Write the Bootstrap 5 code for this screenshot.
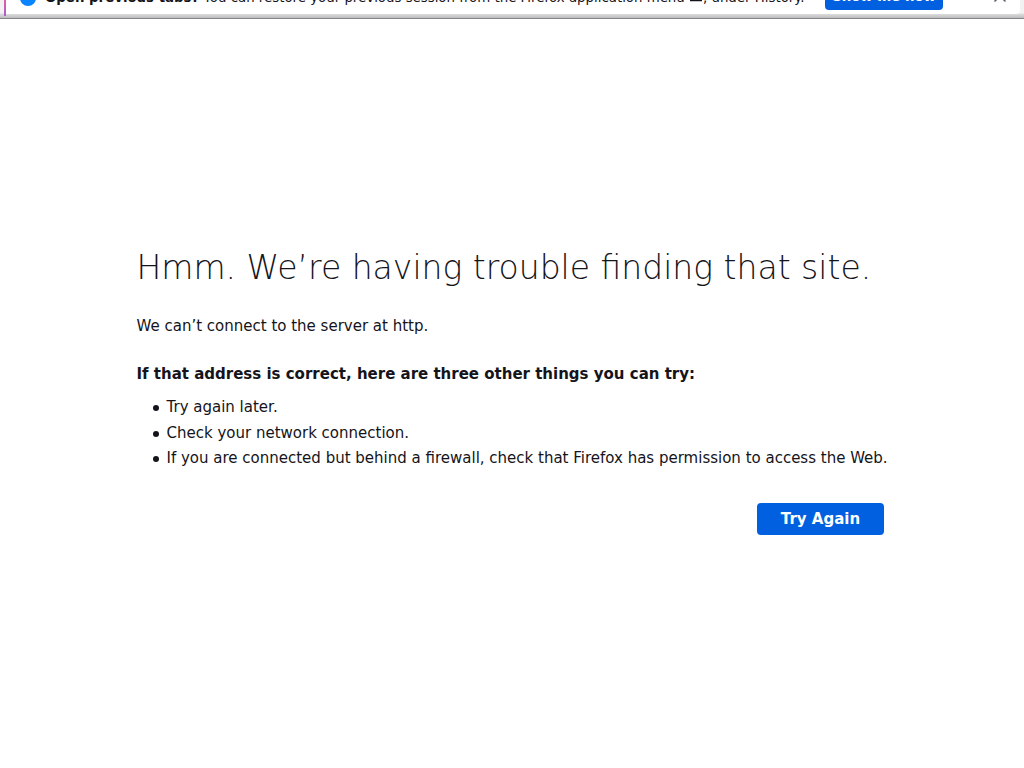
<!DOCTYPE html>
<html lang="en">
<head>
<meta charset="utf-8">
<title>Problem loading page</title>
<link href="https://cdn.jsdelivr.net/npm/bootstrap@5.3.0/dist/css/bootstrap.min.css" rel="stylesheet">
<style>
html,body{height:100%;overflow:hidden}
body{background:#fff;color:#15141a;font-family:"DejaVu Sans",sans-serif;font-size:15px}
.chrome-strip{height:19px;overflow:hidden;background:linear-gradient(#f2f2f2 0,#f2f2f2 13px,#dcdcdc 14px,#bdbdbf 18px);border-bottom:1px solid #858589}
.info-bar{display:flow-root;height:14px;margin:0 4px 0 6px;background:#fff;border-radius:0 0 4px 0;position:relative;font-size:13.33px;line-height:16px;color:#15141a;white-space:nowrap}
.info-bar::before{content:"";position:absolute;left:-2px;top:0;width:2px;height:16px;background:linear-gradient(#e060a0,#a860d0)}
.info-row{margin-top:-12px;padding-left:14px;height:22px}
.info-dot{width:16px;height:16px;border-radius:50%;background:#0a84ff;margin:1.5px 9px 0 0;flex:none;align-self:flex-start}
.info-msg{width:780px;flex:none;margin-top:-4px}
.info-ham{display:inline-block;vertical-align:-1px}
.info-btn{background:#0060df;color:#fff;font-weight:700;font-size:13.33px;width:118px;height:22px;border-radius:4px;flex:none;text-align:center;line-height:17px;align-self:flex-start}
.info-close{margin:1px 0 0 50px;flex:none;align-self:flex-start;display:block}
.err-wrap{padding:229px 0 0 136.5px;width:884px}
.err-title{font-family:"DejaVu Sans",sans-serif;font-weight:200;font-size:33px;line-height:40px;color:#15141a;margin:0 0 27px;white-space:nowrap}
.err-line{line-height:22px;margin:0}
.err-strong{font-weight:700;margin:26px 0 0;line-height:22px}
.err-list{margin:10px 0 0;padding-left:30px;line-height:25.5px;white-space:nowrap;list-style:none}
.err-list li{position:relative}
.err-list li::before{content:"";position:absolute;left:-13.5px;top:10px;width:6px;height:6px;border-radius:50%;background:#15141a}
.try-btn{background:#0060df;color:#fff;font-weight:700;font-size:15px;width:127px;height:32px;border-radius:4px;border:0;padding:0;margin-top:31.5px}
</style>
</head>
<body>
<div class="chrome-strip">
  <div class="info-bar">
    <div class="info-row d-flex align-items-center">
      <span class="info-dot"></span>
      <span class="info-msg"><b>Open previous tabs?</b> You can restore your previous session from the Firefox application menu <svg class="info-ham" width="14" height="14" viewBox="0 0 14 14" aria-hidden="true"><path d="M1 2.5h12M1 7h12M1 11.5h12" stroke="#15141a" stroke-width="1.6" fill="none"/></svg>, under History.</span>
      <span class="info-btn">Show me how</span>
      <svg class="info-close" width="14" height="14" viewBox="0 0 14 14" aria-hidden="true"><path d="M1.5 1.5l11 11M12.5 1.5l-11 11" stroke="#5b5b66" stroke-width="1.5" fill="none"/></svg>
    </div>
  </div>
</div>
<main class="err-wrap">
  <h1 class="err-title">Hmm. We’re having trouble finding that site.</h1>
  <p class="err-line">We can’t connect to the server at http.</p>
  <p class="err-strong">If that address is correct, here are three other things you can try:</p>
  <ul class="err-list">
    <li>Try again later.</li>
    <li>Check your network connection.</li>
    <li>If you are connected but behind a firewall, check that Firefox has permission to access the Web.</li>
  </ul>
  <div class="d-flex justify-content-end">
    <button class="try-btn" type="button">Try Again</button>
  </div>
</main>
<script src="https://cdn.jsdelivr.net/npm/bootstrap@5.3.0/dist/js/bootstrap.bundle.min.js"></script>
</body>
</html>
